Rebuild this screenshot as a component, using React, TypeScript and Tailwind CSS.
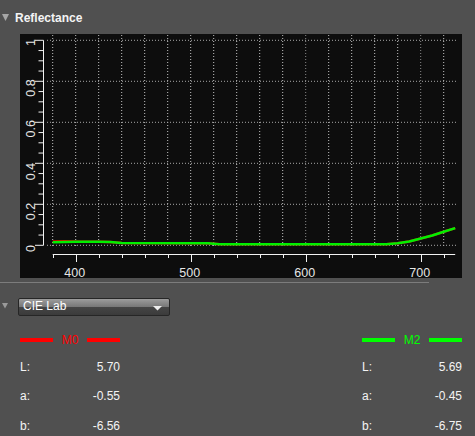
import React from "react";

const FONT = { fontFamily: '"Liberation Sans", Arial, Helvetica, sans-serif' };

// chart geometry (panel-relative pixels)
const X0 = 55.7; // x of 400 nm
const PX_PER_NM = 1.15;
const Y_ZERO = 211.3;
const PX_PER_UNIT = 205;

const nx = (nm: number) => X0 + (nm - 400) * PX_PER_NM;
const vy = (v: number) => Y_ZERO - v * PX_PER_UNIT;

// reflectance samples (nm, value)
const m2: [number, number][] = [
  [380, 0.0146],
  [400, 0.017],
  [420, 0.0171],
  [430, 0.016],
  [440, 0.0112],
  [515, 0.0098],
  [525, 0.0049],
  [670, 0.0049],
  [680, 0.0098],
  [690, 0.0185],
  [700, 0.033],
  [710, 0.048],
  [720, 0.066],
  [730, 0.084],
];

const m0: [number, number][] = [
  [380, 0.019],
  [390, 0.02],
  [398, 0.0185],
  [405, 0.017],
  [420, 0.0171],
  [430, 0.016],
  [440, 0.0112],
  [515, 0.0098],
  [525, 0.0049],
  [670, 0.0049],
  [680, 0.0098],
  [690, 0.0185],
  [700, 0.033],
  [710, 0.048],
  [720, 0.066],
  [730, 0.084],
];

const toPoints = (d: [number, number][]) =>
  d.map(([n, v]) => `${nx(n).toFixed(1)},${vy(v).toFixed(1)}`).join(" ");

const yLabels: { t: string; c: number }[] = [
  { t: "1", c: 8.5 },
  { t: "0.8", c: 54 },
  { t: "0.6", c: 94.8 },
  { t: "0.4", c: 137.5 },
  { t: "0.2", c: 177.5 },
  { t: "0", c: 214.5 },
];

function Chart() {
  const gridX: number[] = [];
  for (let n = 380; n <= 720; n += 20) gridX.push(n);
  const gridY = [0, 0.2, 0.4, 0.6, 0.8, 1];
  const minorY: number[] = [];
  for (let i = 0; i <= 20; i++) minorY.push(i * 0.05);

  return (
    <svg width="442" height="250" viewBox="0 0 442 250" className="-mb-[6px] block" style={FONT}>
      {/* grid */}
      {gridX.map((n) => (
        <line
          key={`gx${n}`}
          x1={nx(n)}
          x2={nx(n)}
          y1={1}
          y2={213}
          stroke={n % 100 === 0 && n >= 600 ? "#8a8a8a" : "#c4c4c4"}
          strokeWidth={1}
          strokeDasharray="1 2"
        />
      ))}
      {gridY.map((v) => (
        <line
          key={`gy${v}`}
          x1={27}
          x2={437}
          y1={vy(v)}
          y2={vy(v)}
          stroke="#a8a8a8"
          strokeWidth={1}
          strokeDasharray="1 2"
        />
      ))}

      {/* y axis */}
      <line x1={23.5} x2={23.5} y1={vy(1)} y2={Y_ZERO} stroke="#f2f2f2" strokeWidth={1} />
      {minorY.map((v, i) => (
        <line
          key={`ty${i}`}
          x1={i % 4 === 0 ? 15 : 18.5}
          x2={23.5}
          y1={vy(v)}
          y2={vy(v)}
          stroke="#f2f2f2"
          strokeWidth={1}
        />
      ))}
      {yLabels.map((l) => (
        <text
          key={l.t}
          x={15}
          y={l.c}
          transform={`rotate(-90 15 ${l.c})`}
          textAnchor="middle"
          fontSize="12.5"
          fill="#e6e6e6"
        >
          {l.t}
        </text>
      ))}

      {/* x axis */}
      <line x1={nx(380)} x2={nx(730)} y1={220.5} y2={220.5} stroke="#f2f2f2" strokeWidth={1} />
      {gridX.map((n) => (
        <line
          key={`tx${n}`}
          x1={Math.round(nx(n)) + 0.5}
          x2={Math.round(nx(n)) + 0.5}
          y1={220.5}
          y2={n % 100 === 0 ? 228 : 224}
          stroke="#f2f2f2"
          strokeWidth={1}
        />
      ))}
      {[400, 500, 600, 700].map((n) => (
        <text key={`lx${n}`} x={nx(n) - 1} y={243} textAnchor="middle" fontSize="12.5" fill="#e6e6e6">
          {n}
        </text>
      ))}

      {/* curves */}
      <polyline points={toPoints(m0)} fill="none" stroke="#e00000" strokeWidth={2.5} strokeLinejoin="round" />
      <polyline points={toPoints(m2)} fill="none" stroke="#00f000" strokeWidth={2.5} strokeLinejoin="round" />
    </svg>
  );
}

function Caret({ className }: { className?: string }) {
  return (
    <svg width="7" height="7" viewBox="0 0 7 7" className={className}>
      <polygon points="0,0 7,0 3.5,7" fill="#a6a6a6" />
    </svg>
  );
}

function Legend({ name, color }: { name: string; color: string }) {
  return (
    <div className="flex h-[16px] items-center">
      <div className="h-[4px] w-[33px]" style={{ backgroundColor: color }} />
      <div className="flex-1 text-center text-[12px] leading-[16px]" style={{ color }}>
        {name}
      </div>
      <div className="h-[4px] w-[33px]" style={{ backgroundColor: color }} />
    </div>
  );
}

function Values({ rows }: { rows: [string, string][] }) {
  return (
    <div className="mt-[11px] flex flex-col gap-y-[13.3px]">
      {rows.map(([k, v]) => (
        <div key={k} className="flex h-[16px] items-center justify-between text-[12px] leading-[16px] text-[#f4f4f4]">
          <span>{k}</span>
          <span>{v}</span>
        </div>
      ))}
    </div>
  );
}

export default function App() {
  return (
    <div className="h-[436px] w-[475px] overflow-hidden bg-[#505050]" style={FONT}>
      {/* Reflectance header */}
      <div className="flex h-[34px] items-start pt-[11px]">
        <Caret className="ml-[2px] mt-[3px]" />
        <span className="ml-[6px] text-[12px] font-bold leading-[15px] text-[#f4f4f4]">Reflectance</span>
      </div>

      {/* chart panel */}
      <div className="ml-[20px] h-[244px] w-[442px] bg-[#0d0d0d]">
        <Chart />
      </div>

      {/* divider */}
      <div className="mt-[4px] h-px w-[429px] bg-[#7c7c7c]" />

      {/* colour space selector */}
      <div className="mt-[15px] flex h-[18px] items-center">
        <svg width="6" height="6" viewBox="0 0 6 6" className="ml-[2px] mt-[-2px]">
          <polygon points="0,0 6,0 3,5.5" fill="#9a9a9a" />
        </svg>
        <div className="relative ml-[10px] flex h-[18px] w-[152px] items-center rounded-[2px] border border-[#262626] bg-[linear-gradient(to_bottom,#9c9c9c_0%,#777777_50%,#454545_52%,#3b3b3b_100%)] pl-[4px]">
          <span className="mt-[-2px] text-[12px] leading-[14px] text-white">CIE Lab</span>
          <svg width="9" height="5" viewBox="0 0 9 5" className="absolute right-[7px] top-[7px]">
            <polygon points="0,0 9,0 4.5,4.5" fill="#ededed" />
          </svg>
        </div>
      </div>

      {/* measurement columns */}
      <div className="mt-[16px] flex justify-between pl-[20px] pr-[13px]">
        <div className="w-[100px]">
          <Legend name="M0" color="#ff0000" />
          <Values
            rows={[
              ["L:", "5.70"],
              ["a:", "-0.55"],
              ["b:", "-6.56"],
            ]}
          />
        </div>
        <div className="w-[100px]">
          <Legend name="M2" color="#00ff00" />
          <Values
            rows={[
              ["L:", "5.69"],
              ["a:", "-0.45"],
              ["b:", "-6.75"],
            ]}
          />
        </div>
      </div>
    </div>
  );
}
